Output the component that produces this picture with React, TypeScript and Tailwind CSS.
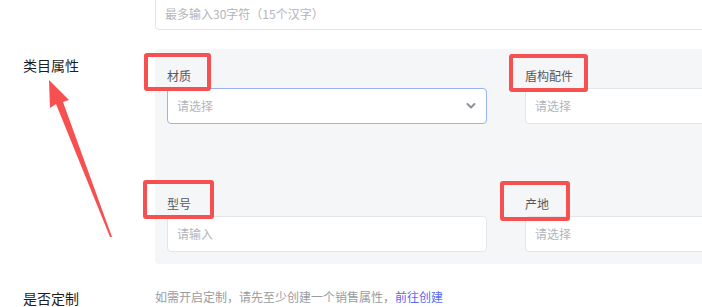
import React from "react";

const font = { fontFamily: '"Noto Sans CJK SC", "Noto Sans", sans-serif' };

function Field({ label, placeholder, focused, select }: { label: string; placeholder: string; focused?: boolean; select?: boolean }) {
  return (
    <div className="flex flex-col">
      <div className="text-[12px] leading-[16px] text-[#55585e] mb-[4px]">{label}</div>
      <div
        className={
          focused
            ? "relative h-[36px] rounded-[4px] border border-[#98b3f3] bg-white px-[9px] flex items-center text-[12px] text-[#b2b5bb]"
            : "relative h-[36px] rounded-[4px] border border-[#e3e5e9] bg-white px-[9px] flex items-center text-[12px] text-[#b2b5bb]"
        }
      >
        {placeholder}
        {select && focused ? (
          <svg className="absolute right-[10px] top-[13px]" width="10" height="8" viewBox="0 0 10 8">
            <polyline points="1.5,2 5,5.5 8.5,2" fill="none" stroke="#8d9099" strokeWidth="2" strokeLinecap="round" strokeLinejoin="round" />
          </svg>
        ) : null}
      </div>
    </div>
  );
}

export default function App() {
  return (
    <div className="relative w-[702px] h-[307px] overflow-hidden bg-white" style={font}>
      <div className="flex flex-col">
        <div className="flex">
          <div className="w-[155px] shrink-0" />
          <div className="w-[600px] shrink-0 -mt-[6px] h-[36px] rounded-[4px] border border-[#e3e5e9] bg-white px-[9px] pt-[4px] flex items-center text-[12px] text-[#b2b5bb]">
            最多输入30字符（15个汉字）
          </div>
        </div>

        <div className="flex mt-[19px]">
          <div className="w-[155px] shrink-0 pl-[23px] pt-[5px] text-[14px] leading-[22px] text-[#1d1d1f]">类目属性</div>
          <div className="w-[600px] shrink-0 rounded-[4px] bg-[#f5f6f8] pl-[12px] pt-[19px] pb-[12px] grid grid-cols-[320px_320px] gap-x-[38px] gap-y-[72px]">
            <Field label="材质" placeholder="请选择" focused select />
            <Field label="盾构配件" placeholder="请选择" select />
            <Field label="型号" placeholder="请输入" />
            <Field label="产地" placeholder="请选择" select />
          </div>
        </div>

        <div className="flex mt-[23px]">
          <div className="w-[155px] shrink-0 pl-[23px] text-[14px] leading-[22px] text-[#1d1d1f]">是否定制</div>
          <div className="text-[12px] leading-[20px] text-[#9a9ca1]">
            如需开启定制，请先至少创建一个销售属性，<span className="text-[#5a6af0]">前往创建</span>
          </div>
        </div>
      </div>

      {/* annotation overlay */}
      <div className="pointer-events-none absolute inset-0">
        <div className="absolute left-[144px] top-[53px] w-[67px] h-[38px] border-[4px] border-[#f65050] rounded-[3px]" />
        <div className="absolute left-[509px] top-[54px] w-[79px] h-[38px] border-[4px] border-[#f65050] rounded-[3px]" />
        <div className="absolute left-[143px] top-[180px] w-[71px] h-[39px] border-[4px] border-[#f65050] rounded-[3px]" />
        <div className="absolute left-[500px] top-[181px] w-[70px] h-[40px] border-[4px] border-[#f65050] rounded-[3px]" />
        <svg className="absolute left-0 top-0" width="702" height="307" viewBox="0 0 702 307">
          <polygon points="49,80 69,100 63,102 112,237 110,237 56,104 50,108" fill="#f65050" />
        </svg>
      </div>
    </div>
  );
}
